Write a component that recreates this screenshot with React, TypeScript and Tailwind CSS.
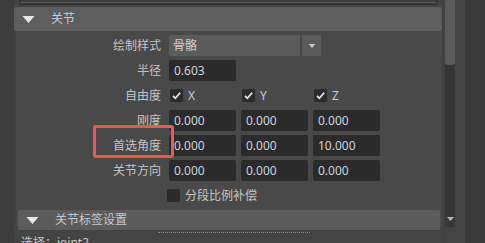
import React from "react";

const font = { fontFamily: '"Noto Sans", "Noto Sans CJK SC", sans-serif' };

function Tri({ className }: { className: string }) {
  return (
    <svg viewBox="0 0 12 7" className={className}>
      <path d="M0 0 L12 0 L6 7 Z" fill="currentColor" />
    </svg>
  );
}

function Check() {
  return (
    <div className="flex h-[13px] w-[13px] items-center justify-center rounded-[2px] bg-[#2b2b2b]">
      <svg viewBox="0 0 13 13" className="h-[13px] w-[13px]">
        <path d="M3 6.8 L5.4 9.3 L10.2 3.6" fill="none" stroke="#e6e6e6" strokeWidth="1.7" />
      </svg>
    </div>
  );
}

function Field({ value }: { value: string }) {
  return (
    <div className="flex h-[21px] w-[67px] items-center rounded-[2px] bg-[#2b2b2b] pl-[5px] text-[12px] text-[#c9d3de]">
      {value}
    </div>
  );
}

function Row({ label, children, highlight }: { label: string; children: React.ReactNode; highlight?: boolean }) {
  return (
    <div className="relative flex h-[21px] shrink-0 items-center">
      <div className="w-[145px] text-right text-[12px] text-[#c4c4c4]">{label}</div>
      <div className="ml-[8px] flex items-center gap-[5px]">{children}</div>
      {highlight && (
        <div className="absolute left-[77px] top-[-10px] h-[33px] w-[81px] rounded-[3px] border-[3px] border-[#ef5656]" />
      )}
    </div>
  );
}

function Axis({ name }: { name: string }) {
  return (
    <div className="flex w-[67px] items-center pl-[1px]">
      <Check />
      <span className="ml-[5px] text-[12px] text-[#c4ccd6]">{name}</span>
    </div>
  );
}

export default function App() {
  return (
    <div className="flex h-[243px] w-[485px] overflow-hidden bg-[#444444]" style={font}>
      <div className="w-[14px] shrink-0 bg-[#3d3d3d]" />

      <div className="flex w-[428px] shrink-0 flex-col">
        <div className="ml-[5px] mr-[4px] h-[5px] shrink-0 rounded-b-[3px] border-x border-b border-[#2f2f2f] bg-[#3c3c3c]">
          <div className="h-[3px] border-b border-[#555555]" />
        </div>

        <div className="mt-[2px] flex h-[24px] shrink-0 items-center rounded-[2px] bg-[#5d5d5d]">
          <Tri className="ml-[8px] h-[7px] w-[13px] text-[#e8e8e8]" />
          <span className="ml-[16px] text-[12px] text-[#c8ccd2]">关节</span>
        </div>

        <div className="flex h-[196px] shrink-0 flex-col gap-[4px] border-l-2 border-[#414141] bg-[#494949] pt-[4px]">
          <Row label="绘制样式">
            <div className="flex h-[21px] items-center gap-[2px]">
              <div className="flex h-[21px] w-[131px] items-center rounded-l-[2px] bg-[#5b5b5b] pl-[4px] text-[12px] text-[#cfcfcf]">
                骨骼
              </div>
              <div className="flex h-[21px] w-[19px] items-center justify-center rounded-r-[2px] bg-[#5b5b5b]">
                <Tri className="h-[4px] w-[8px] text-[#c8c8c8]" />
              </div>
            </div>
          </Row>
          <Row label="半径">
            <Field value="0.603" />
          </Row>
          <Row label="自由度">
            <Axis name="X" />
            <Axis name="Y" />
            <Axis name="Z" />
          </Row>
          <Row label="刚度">
            <Field value="0.000" />
            <Field value="0.000" />
            <Field value="0.000" />
          </Row>
          <Row label="首选角度" highlight>
            <Field value="0.000" />
            <Field value="0.000" />
            <Field value="10.000" />
          </Row>
          <Row label="关节方向">
            <Field value="0.000" />
            <Field value="0.000" />
            <Field value="0.000" />
          </Row>
          <div className="flex h-[21px] shrink-0 items-center pl-[151px]">
            <div className="h-[13px] w-[13px] rounded-[2px] bg-[#2b2b2b]" />
            <span className="ml-[5px] text-[12px] text-[#c4c4c4]">分段比例补偿</span>
          </div>
          <div className="mx-[2px] flex h-[20px] shrink-0 items-center rounded-t-[2px] bg-[#5c5c5c]">
            <Tri className="ml-[8px] h-[7px] w-[13px] text-[#e8e8e8]" />
            <span className="ml-[16px] text-[12px] text-[#c4c8ce]">关节标签设置</span>
          </div>
        </div>

        <div className="relative min-h-0 flex-1 overflow-hidden">
          <div className="absolute left-[144px] top-[5px] w-[152px] border-t border-dotted border-[#8a8a8a]" />
          <div className="pl-[7px] pt-[9px] text-[12px] leading-[14px] text-[#c4c4c4]">选择：joint2</div>
        </div>
      </div>

      <div className="w-[3px] shrink-0 bg-[#414141]" />

      <div className="flex w-[10px] shrink-0 flex-col">
        <div className="relative h-[227px] shrink-0 bg-[#373737]">
          <div className="h-[65px] rounded-b-[3px] bg-[#5a5a5a]" />
          <div className="absolute bottom-[6px] left-[2px]">
            <Tri className="h-[4px] w-[7px] text-[#b4b4b4]" />
          </div>
        </div>
      </div>

      <div className="w-[10px] shrink-0" />
      <div className="flex-1 bg-[#3a3a3a]" />
    </div>
  );
}
